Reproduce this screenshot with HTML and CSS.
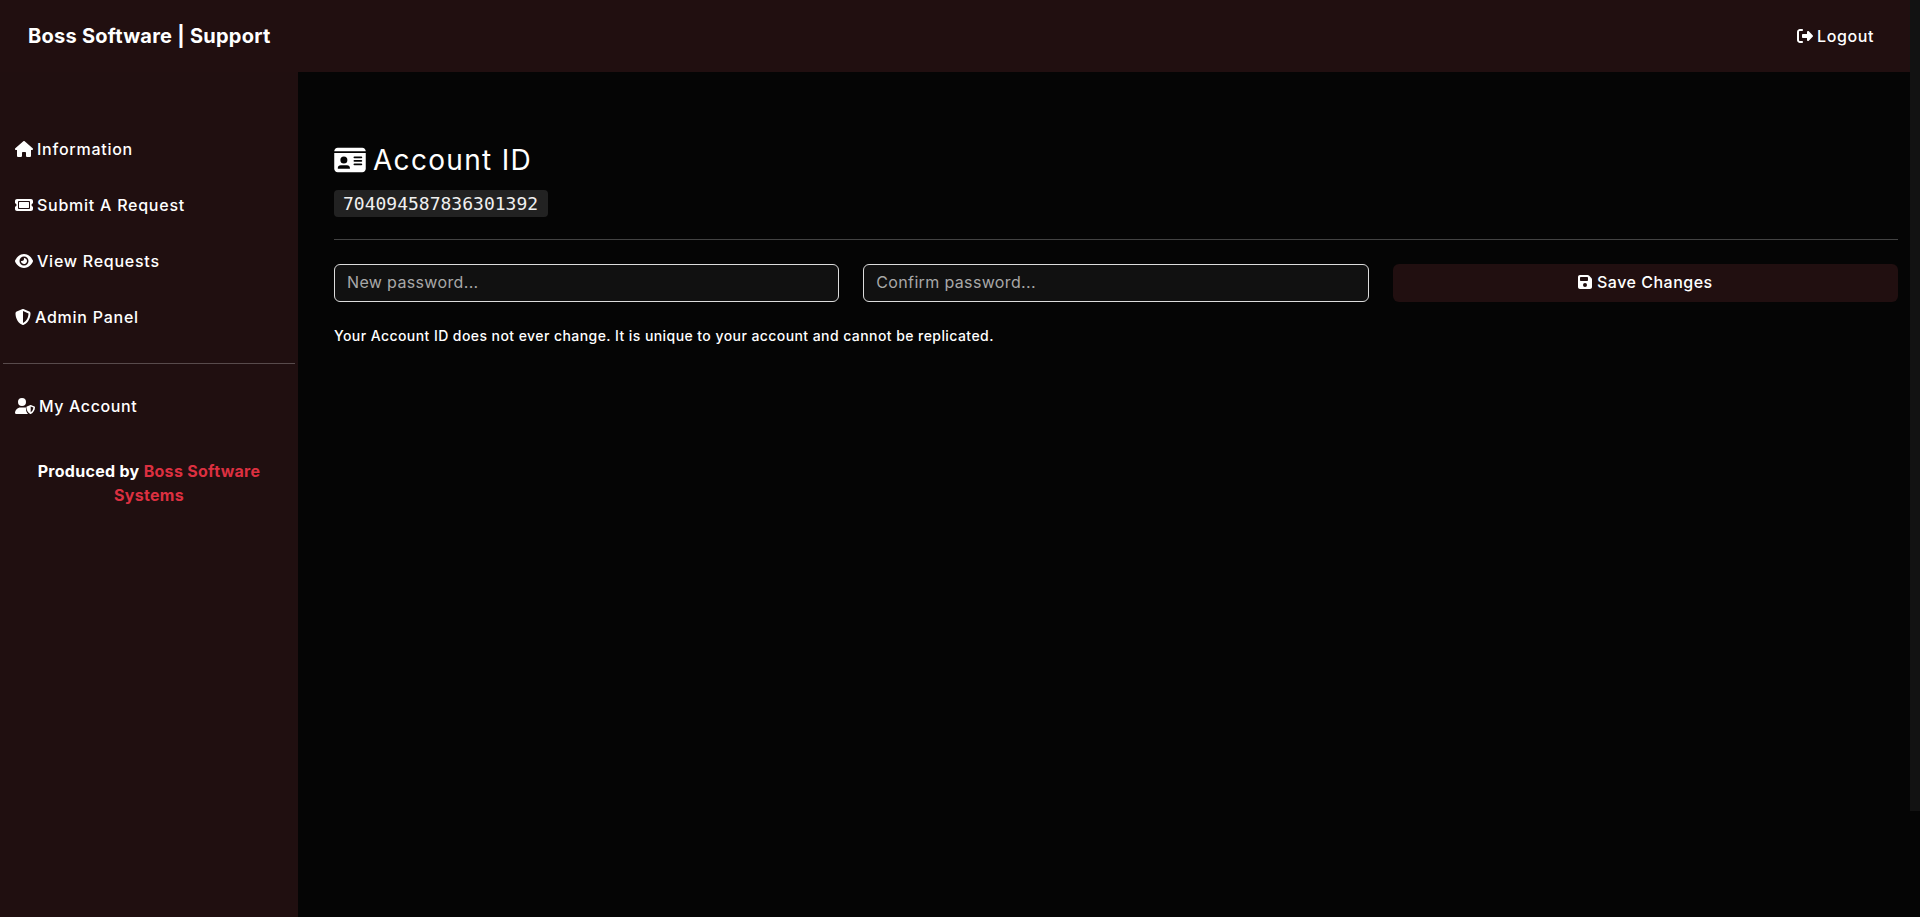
FILE: index.html
```html
<!DOCTYPE html>
<html lang="en">
<head>
<meta charset="utf-8">
<title>Boss Software | Support</title>
<link rel="stylesheet" href="styles.css">
</head>
<body>
<div class="app">
  <div class="page">
    <header class="topbar">
      <span class="brand">Boss Software | Support</span>
      <a class="logout"><svg class="icon" viewBox="0 0 512 512"><path d="M377.900 105.900L500.700 228.700c7.200 7.200 11.300 17.100 11.300 27.300s-4.100 20.100-11.300 27.300L377.900 406.100c-6.400 6.400-15 9.900-24 9.900c-18.700 0-33.900-15.200-33.900-33.900l0-62.100-128 0c-17.700 0-32-14.300-32-32l0-64c0-17.700 14.300-32 32-32l128 0 0-62.100c0-18.700 15.200-33.900 33.900-33.900c9 0 17.600 3.500 24 9.900zM160 96L96 96c-17.700 0-32 14.300-32 32l0 256c0 17.700 14.300 32 32 32l64 0c17.700 0 32 14.300 32 32s-14.300 32-32 32l-64 0c-53 0-96-43-96-96L0 128C0 75 43 32 96 32l64 0c17.700 0 32 14.300 32 32s-14.300 32-32 32z"/></svg>Logout</a>
    </header>
    <div class="body">
      <aside class="sidebar">
        <nav class="nav">
          <a class="nav-item"><svg class="icon wide" viewBox="0 0 576 512"><path d="M575.800 255.500c0 18-15 32.100-32 32.100h-32l.7 160.200c0 2.700-.2 5.400-.5 8.100V472c0 22.100-17.900 40-40 40H456c-1.100 0-2.200 0-3.300-.1c-1.400 .1-2.800 .1-4.200 .1H416 392c-22.100 0-40-17.900-40-40V448 384c0-17.700-14.300-32-32-32H256c-17.700 0-32 14.300-32 32v64 24c0 22.100-17.900 40-40 40H160 128.100c-1.500 0-3-.1-4.500-.2c-1.200 .1-2.400 .2-3.600 .2H104c-22.100 0-40-17.900-40-40V360c0-.9 0-1.900 .1-2.800V287.600H32c-18 0-32-14-32-32.100c0-9 3-17 10-24L266.400 8c7-7 15-8 22-8s15 2 21 7L564.800 231.500c8 7 12 15 11 24z"/></svg>Information</a>
          <a class="nav-item"><svg class="icon wide" viewBox="0 0 576 512"><path d="M64 64C28.700 64 0 92.700 0 128v64c0 8.800 7.400 15.700 15.700 18.600C34.500 217.100 48 235 48 256s-13.500 38.900-32.300 45.400C7.400 304.300 0 311.200 0 320v64c0 35.300 28.700 64 64 64H512c35.300 0 64-28.700 64-64V320c0-8.800-7.400-15.700-15.700-18.600C541.500 294.900 528 277 528 256s13.500-38.900 32.300-45.400c8.300-2.900 15.700-9.800 15.700-18.600V128c0-35.300-28.700-64-64-64H64zm64 112l0 160c0 8.800 7.200 16 16 16H432c8.800 0 16-7.200 16-16V176c0-8.800-7.200-16-16-16H144c-8.800 0-16 7.200-16 16zM96 160c0-17.700 14.300-32 32-32H448c17.700 0 32 14.300 32 32V352c0 17.700-14.300 32-32 32H128c-17.700 0-32-14.300-32-32V160z"/></svg>Submit A Request</a>
          <a class="nav-item"><svg class="icon wide" viewBox="0 0 576 512"><path d="M288 32c-80.800 0-145.500 36.800-192.600 80.600C48.600 156 17.300 208 2.500 243.700c-3.300 7.900-3.300 16.700 0 24.600C17.300 304 48.600 356 95.400 399.400C142.500 443.200 207.200 480 288 480s145.500-36.800 192.600-80.600c46.800-43.500 78.100-95.400 93-131.100c3.300-7.900 3.300-16.700 0-24.600c-14.900-35.700-46.200-87.700-93-131.100C433.500 68.800 368.800 32 288 32zM144 256a144 144 0 1 1 288 0 144 144 0 1 1 -288 0zm144-64c0 35.300-28.700 64-64 64c-7.100 0-13.900-1.200-20.300-3.300c-5.500-1.800-11.900 1.600-11.700 7.400c.3 6.900 1.300 13.800 3.200 20.700c13.700 51.200 66.400 81.600 117.600 67.900s81.600-66.400 67.900-117.600c-11.100-41.500-47.800-69.400-88.600-71.100c-5.800-.2-9.200 6.100-7.400 11.700c2.100 6.400 3.300 13.200 3.300 20.300z"/></svg>View Requests</a>
          <a class="nav-item"><svg class="icon" viewBox="0 0 512 512"><path d="M256 0c4.600 0 9.200 1 13.400 2.900L457.700 82.800c22 9.300 38.400 31 38.300 57.200c-.5 99.200-41.300 280.700-213.600 363.200c-16.700 8-36.100 8-52.800 0C57.300 420.700 16.500 239.200 16 140c-.1-26.200 16.300-47.900 38.300-57.200L242.700 2.900C246.800 1 251.400 0 256 0zm0 66.800V444.800C394 378 431.100 230.100 432 141.400L256 66.800l0 0z"/></svg>Admin Panel</a>
        </nav>
        <hr class="side-rule">
        <a class="nav-item account"><svg class="icon wider" viewBox="0 0 640 512"><path d="M224 256A128 128 0 1 0 224 0a128 128 0 1 0 0 256zm-45.700 48C79.800 304 0 383.800 0 482.300C0 498.700 13.300 512 29.700 512H418c-42-38-68-104-68-176c0-11 1-22 3-32H178.300zM496 224l-115 46c-11 4-17 14-17 25c0 90 48 180 122 215c6 3 14 3 20 0c74-35 134-115 134-215c0-11-6-21-17-25L508 224c-4-1-8-1-12 0zm6 47l86 34c-4 70-45 127-86 150V271z"/></svg>My Account</a>
        <p class="credit">Produced by <span class="credit-red">Boss Software Systems</span></p>
      </aside>
      <main class="main">
        <h1 class="title"><svg class="title-icon" viewBox="0 0 576 512"><path d="M0 96l576 0c0-35.300-28.700-64-64-64L64 32C28.700 32 0 60.700 0 96zm0 32V416c0 35.300 28.700 64 64 64H512c35.300 0 64-28.700 64-64V128H0zM64 405.300c0-29.500 23.900-53.300 53.300-53.300H234.700c29.500 0 53.300 23.900 53.300 53.300c0 5.900-4.800 10.700-10.700 10.700H74.700c-5.900 0-10.700-4.800-10.700-10.700zM176 192a64 64 0 1 1 0 128 64 64 0 1 1 0-128zm176 16c0-8.800 7.200-16 16-16H496c8.800 0 16 7.200 16 16s-7.200 16-16 16H368c-8.800 0-16-7.200-16-16zm0 64c0-8.800 7.200-16 16-16H496c8.800 0 16 7.200 16 16s-7.200 16-16 16H368c-8.800 0-16-7.200-16-16zm0 64c0-8.800 7.200-16 16-16H496c8.800 0 16 7.200 16 16s-7.200 16-16 16H368c-8.800 0-16-7.200-16-16z"/></svg>Account ID</h1>
        <code class="account-id">704094587836301392</code>
        <hr class="main-rule">
        <form class="form">
          <input class="field" type="password" placeholder="New password...">
          <input class="field" type="password" placeholder="Confirm password...">
          <button class="save" type="button"><svg class="icon save-icon" viewBox="0 0 448 512"><path d="M64 32C28.700 32 0 60.700 0 96V416c0 35.300 28.700 64 64 64H384c35.300 0 64-28.700 64-64V173.300c0-17-6.700-33.300-18.700-45.300L352 50.700C340 38.700 323.700 32 306.700 32H64zm0 96c0-17.700 14.300-32 32-32H288c17.700 0 32 14.300 32 32v64c0 17.700-14.300 32-32 32H96c-17.700 0-32-14.300-32-32V128zM224 288a64 64 0 1 1 0 128 64 64 0 1 1 0-128z"/></svg>Save Changes</button>
        </form>
        <p class="note">Your Account ID does not ever change. It is unique to your account and cannot be replicated.</p>
      </main>
    </div>
  </div>
  <div class="rail"><div class="thumb"></div></div>
</div>
</body>
</html>
```
FILE: styles.css
```css
* { box-sizing: border-box; }
html, body { margin: 0; height: 100%; background: #050505; }
body { font-family: Inter, "Noto Sans", sans-serif; color: #fff; overflow: hidden; }
.app { display: flex; height: 917px; }
.page { flex: 1; display: flex; flex-direction: column; min-width: 0; }
.rail { width: 10px; background: #050505; }
.thumb { height: 811px; background: #121212; }
.topbar { height: 72px; flex: none; display: flex; align-items: center; justify-content: space-between; padding: 0 36px 0 28px; background: #210f10; }
.brand { font-size: 20px; font-weight: 700; letter-spacing: .25px; }
.logout { display: flex; align-items: center; gap: 4px; font-size: 16px; font-weight: 500; letter-spacing: .6px; }
.body { flex: 1; display: flex; min-height: 0; }
.sidebar { width: 298px; flex: none; background: #200f10; padding-top: 49px; }
.nav { display: flex; flex-direction: column; }
.nav-item { height: 56px; display: flex; align-items: center; gap: 4px; padding-left: 15px; font-size: 16px; font-weight: 500; letter-spacing: .75px; }
.account { letter-spacing: .6px; }
.icon { width: 16px; height: 16px; fill: #fff; flex: none; }
.icon.wide { width: 18px; }
.icon.wider { width: 20px; }
.side-rule { margin: 18px 3px 14px; border: 0; border-top: 1px solid rgba(255,255,255,.25); }
.credit { margin: 25px 16px 0; text-align: center; font-size: 16px; font-weight: 700; line-height: 24px; letter-spacing: .3px; }
.credit-red { color: #dc3040; }
.main { flex: 1; padding: 68px 12px 0 36px; min-width: 0; }
.title { margin: 0; height: 40px; display: flex; align-items: center; gap: 7px; font-size: 28px; font-weight: 400; letter-spacing: 1.3px; }
.title-icon { width: 32px; height: 28px; fill: #fff; flex: none; }
.account-id { display: block; width: 214px; height: 27px; margin-top: 10px; padding-left: 9px; background: #222; border-radius: 4px; font-family: "DejaVu Sans Mono", monospace; font-size: 18px; line-height: 27px; color: #f0f0f0; }
.main-rule { margin: 22px 0 24px; border: 0; border-top: 1px solid rgba(255,255,255,.25); }
.form { display: grid; grid-template-columns: repeat(3, 1fr); gap: 24px; }
.field { height: 38px; padding: 0 12px 2px; background: #111; border: 1px solid #ddd; border-radius: 6px; font-family: inherit; font-size: 16px; letter-spacing: .35px; color: #fff; }
.field::placeholder { color: #a8a8a8; opacity: 1; }
.save { height: 38px; display: flex; align-items: center; justify-content: center; gap: 5px; padding-bottom: 3px; background: #210f10; border: 0; border-radius: 6px; color: #fff; font-family: inherit; font-size: 16px; font-weight: 500; letter-spacing: .5px; }
.save-icon { width: 14px; }
.note { margin: 25px 0 0; font-size: 14px; font-weight: 500; line-height: 18px; letter-spacing: .43px; }
```
